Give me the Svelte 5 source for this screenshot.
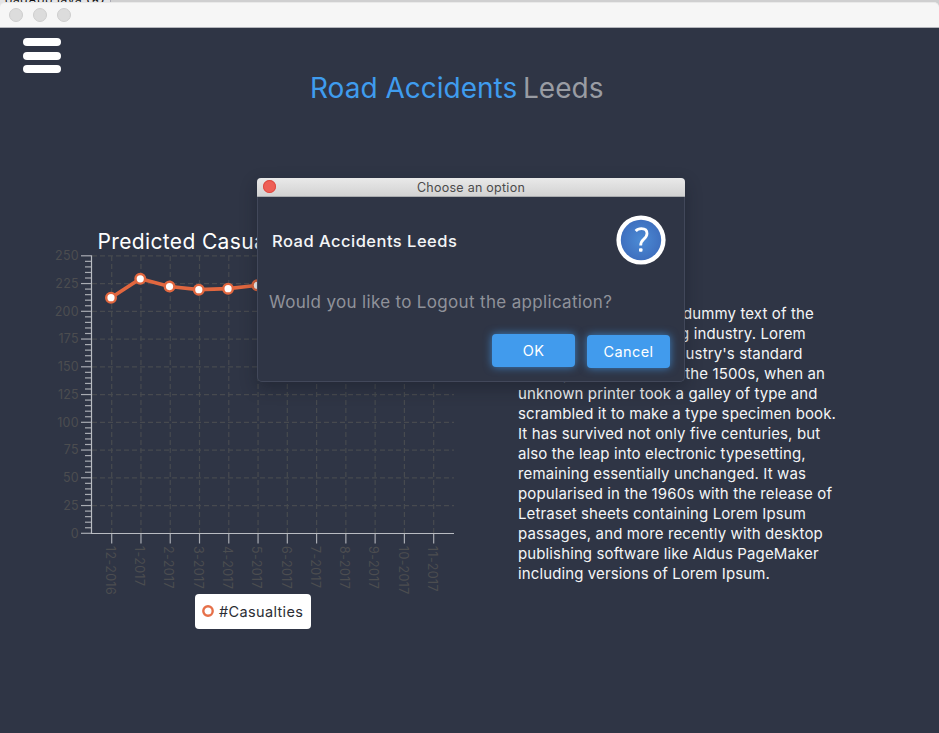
<script>
  const months = ['12-2016', '1-2017', '2-2017', '3-2017', '4-2017', '5-2017', '6-2017', '7-2017', '8-2017', '9-2017', '10-2017', '11-2017'];
  const values = [212.3, 229.3, 222.3, 219.5, 220.4, 223.4, 225, 224, 222, 221, 220, 219];
  const majors = Array.from({ length: 11 }, (_, i) => i * 25);
  const minors = Array.from({ length: 51 }, (_, i) => i * 5).filter((v) => v % 25);
  const px = (i) => 71.7 + i * 29.27;
  const py = (v) => 305.3 - v * 1.11;
  const points = values.map((v, i) => `${px(i) - 0.7},${py(v)}`).join(' ');
  const lines = [
    'Lorem Ipsum is simply dummy text of the',
    'printing and typesetting industry. Lorem',
    "Ipsum has been the industry's standard",
    'dummy text ever since the 1500s, when an',
    'unknown printer took a galley of type and',
    'scrambled it to make a type specimen book.',
    'It has survived not only five centuries, but',
    'also the leap into electronic typesetting,',
    'remaining essentially unchanged. It was',
    'popularised in the 1960s with the release of',
    'Letraset sheets containing Lorem Ipsum',
    'passages, and more recently with desktop',
    'publishing software like Aldus PageMaker',
    'including versions of Lorem Ipsum.'
  ];
</script>

<div class="screen">
  <div class="behind"><span>oadApp.java</span><b>⊗</b><i></i></div>
  <div class="titlebar"><i></i><i></i><i></i></div>
  <header>
    <div class="menu"><i></i><i></i><i></i></div>
    <h1><span class="brand">Road Accidents</span><span class="city">Leeds</span></h1>
  </header>
  <main>
    <section class="chart">
      <svg width="430" height="372" viewBox="0 0 430 372">
        <text class="heading" x="57.6" y="21.3">Predicted Casualties</text>
        <g class="grid">
          {#each majors.slice(1) as v}
            <line x1="52" x2="414" y1={py(v)} y2={py(v)} />
          {/each}
          {#each months as _, i}
            <line x1={px(i)} x2={px(i)} y1="28" y2="305" />
          {/each}
        </g>
        <g class="axis">
          <path d="M51.5 27.3V305.5H414" />
          {#each majors as v}
            <line x1="41" x2="51" y1={py(v)} y2={py(v)} />
          {/each}
          {#each minors as v}
            <line x1="45" x2="51" y1={py(v)} y2={py(v)} />
          {/each}
          {#each months as _, i}
            <line x1={px(i)} x2={px(i)} y1="306" y2="315.5" />
          {/each}
        </g>
        <g class="labels">
          {#each majors as v}
            <text x="38.8" y={py(v) + 4.4} text-anchor="end">{v}</text>
          {/each}
          {#each months as m, i}
            <text class="month" transform="translate({px(i) - 5.8} 318) rotate(90)">{m}</text>
          {/each}
        </g>
        <polyline class="series" {points} />
        {#each values as v, i}
          <circle class="dot" cx={px(i) - 0.7} cy={py(v)} r="4.8" />
        {/each}
      </svg>
      <div class="legend">
        <svg width="12" height="12" viewBox="0 0 12 12"><circle cx="6" cy="6" r="4.7" fill="#fff" stroke="#e67049" stroke-width="2.4" /></svg>
        <span>#Casualties</span>
      </div>
    </section>
    <p>
      {#each lines as line}<span>{line}</span>{/each}
    </p>
  </main>

  <div class="dialog">
    <div class="bar"><i></i><span>Choose an option</span></div>
    <div class="top">
      <strong>Road Accidents Leeds</strong>
      <svg width="50" height="50" viewBox="0 0 50 50">
        <defs>
          <radialGradient id="disc"><stop offset="0" stop-color="#4c8bd5" /><stop offset="1" stop-color="#3f70bf" /></radialGradient>
        </defs>
        <circle cx="25" cy="25" r="24.6" fill="#fff" />
        <circle cx="25" cy="25" r="20.2" fill="url(#disc)" />
        <path d="M19.7 16C21 14.5 23.2 13.7 25.4 13.7C28.9 13.7 31 15.5 31 18.5C31 21.2 29.6 22.7 27.6 24.3C25.5 26 24.7 27.2 24.7 30.6" fill="none" stroke="#fff" stroke-width="2.8" />
        <rect x="23" y="33.2" width="3.5" height="3.6" rx="1" fill="#fff" />
      </svg>
    </div>
    <div class="question">Would you like to Logout the application?</div>
    <div class="actions">
      <button class="ok">OK</button>
      <button class="cancel">Cancel</button>
    </div>
  </div>
</div>

<style>
  .screen {
    position: relative;
    width: 939px;
    height: 733px;
    overflow: hidden;
    display: flex;
    flex-direction: column;
    background: #2f3545;
    font-family: Inter, "Liberation Sans", sans-serif;
    color: #f4f5f7;
  }
  .behind {
    flex: none;
    height: 8px;
    margin-bottom: -6px;
    overflow: hidden;
    display: flex;
    background: #e4e4e6;
    color: #111;
    font-size: 12px;
    line-height: 2px;
  }
  .behind span { padding-left: 5px; margin-top: -1px; width: 82px; letter-spacing: 0.6px; }
  .behind b { margin-top: -2px; width: 23px; }
  .behind i { flex: 1; background: #cfcfd0; border-left: 1px solid #a9a9b4; }
  .titlebar {
    position: relative;
    height: 26px;
    box-sizing: border-box;
    padding: 6px 9px;
    display: flex;
    gap: 10px;
    background: #f6f6f6;
    border-top: 1px solid #e9e9e9;
    border-bottom: 1px solid #b4b6bc;
    border-radius: 5px 5px 0 0;
  }
  .titlebar i {
    box-sizing: border-box;
    width: 14px;
    height: 14px;
    margin-top: -1px;
    border-radius: 50%;
    background: #dcdcdc;
    border: 1px solid #cecece;
  }
  header { display: flex; height: 192px; }
  .menu { display: flex; flex-direction: column; gap: 5.6px; padding: 10px 0 0 23px; width: 310px; box-sizing: border-box; }
  .menu i { width: 38px; height: 8px; border-radius: 4px; background: #fff; }
  h1 { margin: 0; padding-top: 42px; display: flex; gap: 5px; font-size: 28px; line-height: 36px; font-weight: 400; white-space: nowrap; }
  .brand { color: #3f9cee; width: 208px; }
  .city { color: #999ca3; }
  main { display: flex; }
  .chart { width: 478px; box-sizing: border-box; padding: 8px 0 0 40px; }
  .chart svg { display: block; }
  .heading { font-size: 21px; fill: #fff; letter-spacing: 0.35px; }
  .grid line { stroke: #474a4f; stroke-width: 1.2; stroke-dasharray: 5 3; }
  .axis path { fill: none; stroke: #b9bcc2; stroke-width: 1.2; }
  .axis line { stroke: #a9acb3; stroke-width: 1.2; }
  .labels text { font-size: 12.5px; fill: #4c4d50; letter-spacing: 0.2px; }
  .labels .month { letter-spacing: 0.4px; }
  .series { fill: none; stroke: #e2673f; stroke-width: 3.6; }
  .dot { fill: #fff; stroke: #e2673f; stroke-width: 2.4; }
  .legend {
    display: flex;
    align-items: center;
    box-sizing: border-box;
    width: 116px;
    height: 35px;
    margin: -6px 0 0 155px;
    padding: 0 0 1px 7px;
    gap: 5px;
    border-radius: 4px;
    background: #fff;
    color: #2b2d33;
    font-size: 14.5px;
    letter-spacing: 0.35px;
  }
  p { margin: 84px 0 0 40px; font-size: 15px; line-height: 20px; letter-spacing: 0.12px; }
  p span { display: block; white-space: nowrap; }
  .dialog {
    position: absolute;
    left: 257px;
    top: 178px;
    width: 428px;
    height: 204px;
    box-sizing: border-box;
    border-radius: 5px;
    background: #2f3545;
    box-shadow: inset 0 0 0 1px #42485a, 0 6px 16px rgba(20, 23, 33, 0.42);
  }
  .bar {
    position: relative;
    height: 19px;
    box-sizing: border-box;
    display: flex;
    align-items: center;
    justify-content: center;
    background: linear-gradient(#e9e9e9, #d2d2d2);
    border-bottom: 1px solid #a9abae;
    border-radius: 4px 4px 0 0;
    color: #4b4b4b;
    font-size: 12.5px;
    letter-spacing: 0.26px;
  }
  .bar i { position: absolute; left: 6px; top: 2px; width: 13px; height: 13px; border-radius: 50%; background: #ee5f56; box-shadow: inset 0 0 0 1px #dc4a42; }
  .top { display: flex; justify-content: space-between; align-items: center; height: 50px; padding: 18px 19px 0 15px; }
  strong { font-size: 16.5px; font-weight: 500; letter-spacing: 0.48px; padding-top: 1px; }
  .question { padding: 26px 0 0 12px; line-height: 22px; font-size: 17px; letter-spacing: 0.33px; color: #8f929a; white-space: nowrap; }
  .actions { display: flex; gap: 12px; padding: 21px 0 0 235px; }
  button {
    width: 83px;
    height: 33px;
    padding: 0;
    border: 0;
    border-radius: 4px;
    background: #419bed;
    color: #fff;
    font: 400 14.5px Inter, "Liberation Sans", sans-serif;
    letter-spacing: 0.4px;
    box-shadow: 0 0 8px rgba(65, 155, 237, 0.75);
  }
  .cancel { margin-top: 1px; }
</style>
